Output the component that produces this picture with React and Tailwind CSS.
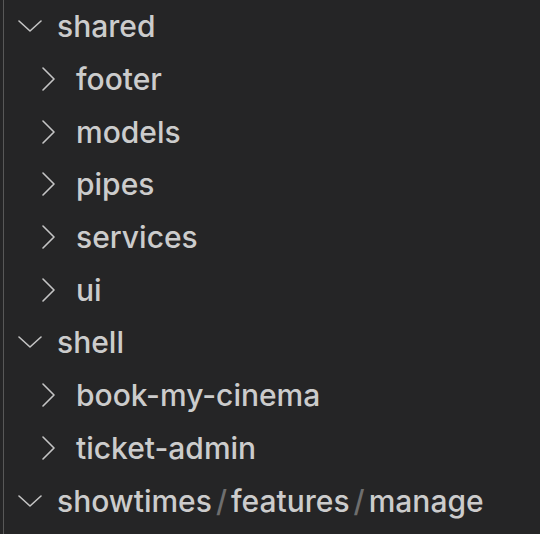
import React from "react";

const Down = () => (
  <svg width="24" height="12" viewBox="0 0 24 12" fill="none" className="shrink-0">
    <path d="M1 1 L12 11 L23 1" stroke="#c5c5c5" strokeWidth="1.6" strokeLinecap="round" strokeLinejoin="round" />
  </svg>
);
const Right = () => (
  <svg width="13" height="24" viewBox="0 0 13 24" fill="none" className="shrink-0">
    <path d="M1 1 L12 12 L1 23" stroke="#c5c5c5" strokeWidth="1.6" strokeLinecap="round" strokeLinejoin="round" />
  </svg>
);

function Row({ level, children }) {
  return (
    <div className="flex items-center h-[52.7px]">
      {level === 0 ? (
        <div className="flex items-center pl-[18px] w-[57px]">
          <Down />
        </div>
      ) : (
        <div className="flex items-center pl-[42px] w-[76px]">
          <Right />
        </div>
      )}
      <span className="text-[#cccccc]">{children}</span>
    </div>
  );
}

export default function App() {
  return (
    <div
      className="w-[540px] h-[534px] bg-[#252526] relative overflow-hidden text-[30px] font-medium leading-none"
      style={{ fontFamily: "Inter, 'Noto Sans', sans-serif" }}
    >
      <div className="absolute left-[3px] top-0 bottom-0 w-px bg-[#585858]" />
      <Row level={0}>shared</Row>
      <Row level={1}>footer</Row>
      <Row level={1}>models</Row>
      <Row level={1}>pipes</Row>
      <Row level={1}>services</Row>
      <Row level={1}>ui</Row>
      <Row level={0}>shell</Row>
      <Row level={1}>book-my-cinema</Row>
      <Row level={1}>ticket-admin</Row>
      <Row level={0}>
        showtimes<span className="text-[#6e6e6e] mx-[4px]">/</span>features<span className="text-[#6e6e6e] mx-[4px]">/</span>manage
      </Row>
    </div>
  );
}
